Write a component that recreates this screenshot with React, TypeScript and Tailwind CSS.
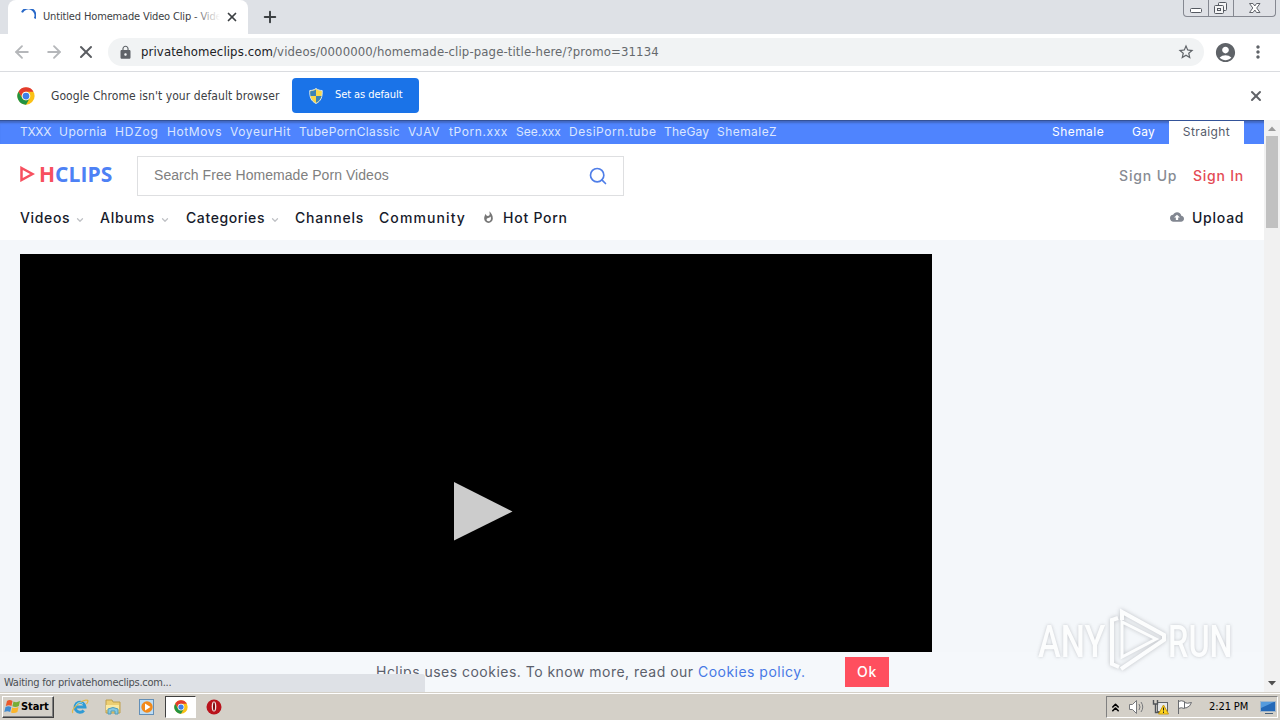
import React from "react";
import {
  ArrowLeft,
  ArrowRight,
  ChevronDown,
  ChevronsUp,
  Plus,
  Search,
  X,
} from "lucide-react";
import {
  MdAccountCircle,
  MdCloudUpload,
  MdLock,
  MdMoreVert,
  MdStarBorder,
  MdWhatshot,
} from "react-icons/md";

const networkLinks = [
  { label: "TXXX", className: "w-[39px] tracking-[-0.3px]" },
  { label: "Upornia", className: "w-[56px] tracking-[0.45px]" },
  { label: "HDZog", className: "w-[52px] tracking-[0.8px]" },
  { label: "HotMovs", className: "w-[63px] tracking-[0.6px]" },
  { label: "VoyeurHit", className: "w-[69px] tracking-[0.6px]" },
  { label: "TubePornClassic", className: "w-[109px] tracking-[0.35px]" },
  { label: "VJAV", className: "w-[41px] tracking-[0.7px]" },
  { label: "tPorn.xxx", className: "w-[67px] tracking-[0.6px]" },
  { label: "See.xxx", className: "w-[53px] tracking-[0px]" },
  { label: "DesiPorn.tube", className: "w-[95px] tracking-[0.55px]" },
  { label: "TheGay", className: "w-[53px] tracking-[0.2px]" },
  { label: "ShemaleZ", className: "w-[64px] tracking-[0.45px]" },
];

const navLinks = [
  { label: "Videos", className: "w-[80px] tracking-[0.65px]", menu: true },
  { label: "Albums", className: "w-[86px] tracking-[0.75px]", menu: true },
  { label: "Categories", className: "w-[109px] tracking-[0.6px]", menu: true },
  { label: "Channels", className: "w-[84px] tracking-[0.8px]", menu: false },
  { label: "Community", className: "w-[103px] tracking-[1.1px]", menu: false },
];

const ChromeLogo = ({ size }: { size: number }) => (
  <svg width={size} height={size} viewBox="0 0 48 48">
    <circle cx="24" cy="24" r="23" fill="#fbc116" />
    <path d="M4 12.5A23 23 0 0 1 44 12.5H24A11.5 11.5 0 0 0 14 30Z" fill="#e33b2e" />
    <path d="M4 12.5A23 23 0 0 0 24 47L34 29.8A11.5 11.5 0 0 1 14 29.8Z" fill="#229342" />
    <circle cx="24" cy="24" r="11.5" fill="#fff" />
    <circle cx="24" cy="24" r="9" fill="#3f7fe8" />
  </svg>
);

const Shield = () => (
  <svg width="14" height="16" viewBox="0 0 14 16">
    <path d="M7 0.5C5 2 3 2.5 0.8 2.5C0.5 9 2 13 7 15.5C12 13 13.5 9 13.2 2.5C11 2.5 9 2 7 0.5Z" fill="#f8d849" stroke="#d5e5ee" />
    <path d="M7 1.5V8H1.5C1.1 6.3 1.2 4.8 1.3 3.2C3.5 3.2 5.3 2.6 7 1.5ZM7 8H12.5C11.8 11 10 13.3 7 14.8Z" fill="#3b83b5" />
  </svg>
);

const WindowButtons = () => (
  <div className="flex h-[17px] w-[93px] rounded-b-[4px] border border-t-0 border-[#858891] bg-[#dfe1e6]">
    <div className="w-[25px] border-r border-[#858891]">
      <svg width="24" height="16" viewBox="0 0 24 16" fill="#fff" stroke="#555961">
        <rect x="6.5" y="8.5" width="11" height="4" rx="1" />
      </svg>
    </div>
    <div className="w-[25px] border-r border-[#858891]">
      <svg width="24" height="16" viewBox="0 0 24 16" fill="#f5f5f6" stroke="#555961">
        <rect x="9.5" y="2.5" width="8" height="8" rx="1" />
        <rect x="5.5" y="5.5" width="9" height="8" rx="1" />
        <rect x="8.5" y="8.5" width="3" height="2" />
      </svg>
    </div>
    <svg width="41" height="16" viewBox="0 0 41 16">
      <path d="M15.5 3.5H19L20.8 6L22.5 3.5H26L22.7 8L26 12.5H22.5L20.8 10L19 12.5H15.5L18.8 8Z" fill="#fff" stroke="#62656c" />
    </svg>
  </div>
);

const TabStrip = () => (
  <div className="flex h-[34px] justify-between bg-[#dee1e6]">
    <div className="flex pl-2">
      <div className="flex h-[34px] w-[240px] items-center rounded-t-lg bg-white pl-[12px]">
        <svg width="16" height="16" viewBox="0 0 16 16" fill="none" stroke="#2868c8" strokeWidth="2">
          <path d="M2 3.4A6.8 6.8 0 0 1 14.8 9.5" />
        </svg>
        <div className="relative ml-[7px] w-[177px] overflow-hidden whitespace-nowrap font-['DejaVu_Sans_Condensed','DejaVu_Sans',sans-serif] text-[11px] [font-stretch:condensed] leading-[16px] tracking-[-0.15px] text-[#3c4043]">
          Untitled Homemade Video Clip - Videos
          <div className="absolute inset-y-0 right-0 w-[28px] bg-linear-to-r from-white/0 to-white" />
        </div>
        <X size={14} strokeWidth={3} className="ml-[5px] text-[#3c4043]" />
      </div>
      <Plus size={18} strokeWidth={2.6} className="ml-[13px] mt-[8px] text-[#3c4043]" />
    </div>
    <div className="pr-1">
      <WindowButtons />
    </div>
  </div>
);

const Toolbar = () => (
  <div className="flex h-[38px] items-center border-b border-[#dadce0] bg-white pb-px">
    <ArrowLeft size={20} strokeWidth={2.2} className="ml-3 text-[#b5b7ba]" />
    <ArrowRight size={20} strokeWidth={2.2} className="ml-3 text-[#b5b7ba]" />
    <X size={20} strokeWidth={2.4} className="ml-[12px] text-[#5a5d61]" />
    <div className="ml-[12px] flex h-7 w-[1096px] items-center rounded-full bg-[#f1f3f4] pl-[10px] pr-[9px]">
      <MdLock size={15} className="text-[#5f6368]" />
      <div className="ml-[8px] flex-1 whitespace-nowrap font-['DejaVu_Sans_Condensed','DejaVu_Sans',sans-serif] text-[13px] [font-stretch:condensed] leading-[18px] tracking-[0.12px] text-[#65696d]">
        <span className="text-[#202124]">privatehomeclips.com</span>
        /videos/0000000/homemade-clip-page-title-here/?promo=31134
      </div>
      <MdStarBorder size={18} className="text-[#5f6368]" />
    </div>
    <MdAccountCircle size={23} className="ml-[10px] text-[#5f6368]" />
    <MdMoreVert size={20} className="ml-[11px] text-[#5f6368]" />
  </div>
);

const DefaultBrowserBar = () => (
  <div className="flex h-[48px] items-center bg-white pb-px pl-[17px] pr-[16px] font-['DejaVu_Sans_Condensed','DejaVu_Sans',sans-serif] [font-stretch:condensed]">
    <ChromeLogo size={18} />
    <span className="ml-4 w-[241px] whitespace-nowrap text-[12px] tracking-[0.07px] text-[#3c4043]">
      Google Chrome isn't your default browser
    </span>
    <button className="flex h-[35px] w-[127px] items-center rounded-[4px] bg-[#1a73e8] pl-[17px] text-[11px] text-white">
      <Shield />
      <span className="ml-[12px] whitespace-nowrap tracking-[-0.08px]">Set as default</span>
    </button>
    <X size={16} strokeWidth={3} className="ml-auto text-[#606368]" />
  </div>
);

const NetworkBar = () => (
  <div className="flex h-6 border-t border-[#345399] bg-[#4f84fe] text-[12px] leading-[22px] shadow-[inset_0_3px_2px_-1px_#4268c2]">
    <div className="flex flex-1 pl-5 text-[#dbe6ff]">
      {networkLinks.map((link) => (
        <a key={link.label} className={`${link.className} whitespace-nowrap`}>
          {link.label}
        </a>
      ))}
    </div>
    <a className="w-[80px] tracking-[0.45px] text-white">Shemale</a>
    <a className="w-[37px] tracking-[0.3px] text-white">Gay</a>
    <a className="mr-5 w-[75px] bg-white text-center tracking-[0.4px] text-[#555b6b]">Straight</a>
  </div>
);

const Logo = () => (
  <div className="flex w-[117px] items-center pb-1 font-['Open_Sans',sans-serif] text-[21px] font-bold leading-6">
    <svg width="15" height="16" viewBox="0 0 15 16" className="mr-[4px]">
      <path d="M1.5 2L12.5 8L1.5 14Z" fill="none" stroke="#f7505f" strokeWidth="2.5" />
    </svg>
    <span className="text-[#f7505f]">H</span>
    <span className="tracking-[0.1px] text-[#4d81f5]">CLIPS</span>
  </div>
);

const SiteHeader = () => (
  <header className="h-24 bg-white px-5 pt-3">
    <div className="flex h-[40px] items-center">
      <Logo />
      <div className="flex h-[40px] w-[487px] items-center justify-between border border-[#dedfe1] pb-px pl-4 pr-[15px]">
        <span className="font-['Liberation_Sans',sans-serif] text-[14px] tracking-[0.05px] text-[#808080]">
          Search Free Homemade Porn Videos
        </span>
        <Search size={20} strokeWidth={2} className="text-[#4f7ee8]" />
      </div>
      <div className="ml-auto flex pb-[2px] text-[14px] font-medium">
        <a className="w-[74px] tracking-[0.85px] text-[#878b93]">Sign Up</a>
        <a className="w-[51px] whitespace-nowrap tracking-[0.75px] text-[#e44b55]">Sign In</a>
      </div>
    </div>
    <nav className="mt-[11px] flex h-5 items-center text-[14px] font-medium tracking-[0.75px] text-[#171b2b]">
      {navLinks.map((link) => (
        <a key={link.label} className={`${link.className} flex items-center whitespace-nowrap`}>
          {link.label}
          {link.menu && <ChevronDown size={10} strokeWidth={3} className="ml-[5px] mt-[5px] text-[#bfc1c5]" />}
        </a>
      ))}
      <MdWhatshot size={13} className="text-[#777]" />
      <a className="ml-[8px]">Hot Porn</a>
      <MdCloudUpload size={14} className="ml-auto text-[#828791]" />
      <a className="ml-2 w-[52px]">Upload</a>
    </nav>
  </header>
);

const AnyRunMark = () => (
  <div className="absolute left-[1038px] top-[487px] flex h-[68px] items-center font-['Roboto',sans-serif] text-[45px] font-medium leading-none text-white opacity-75 [text-shadow:0_0_4px_#b0b3b8]">
    <span className="w-[71px] origin-left scale-x-[0.76]">ANY</span>
    <svg width="58" height="66" viewBox="0 0 58 66" fill="none" stroke="#fff" strokeWidth="4" className="drop-shadow-[0_0_2px_#a8abb0]">
      <path d="M13 14V49L47 31Z" strokeWidth="3" />
      <path d="M9 10L3 12V56L10 59M13 12V4L55 27V32L12 61" />
    </svg>
    <span className="ml-[1px] origin-left scale-x-[0.72]">RUN</span>
  </div>
);

const ScrollBar = () => (
  <div className="flex w-4 flex-col items-center bg-[#f1f1f1]">
    <svg width="16" height="16" viewBox="0 0 16 16">
      <path d="M4 11L8 6.5L12 11Z" fill="#9b9b9b" />
    </svg>
    <div className="h-[92px] w-[12px] bg-[#c1c1c1]" />
    <svg width="16" height="16" viewBox="0 0 16 16" className="mt-auto">
      <path d="M4 5L8 9.5L12 5Z" fill="#505050" />
    </svg>
  </div>
);

const StartFlag = () => (
  <svg width="17" height="16" viewBox="0 0 17 16">
    <path d="M3 2Q5.5 0 8.5 2L7.5 7Q5 5.5 1.8 7Z" fill="#eb582b" />
    <path d="M9.5 2.5Q12.5 4 16 2L14.8 7Q11.5 9 8.4 7.3Z" fill="#76ad36" />
    <path d="M1.5 8Q4.5 6.5 7.3 8L6.2 13Q3.5 11.5 0.3 13Z" fill="#408bd1" />
    <path d="M8.2 8.4Q11.2 10 14.5 8L13.4 13Q10.2 15 7 13.4Z" fill="#fbb52a" />
  </svg>
);

const Taskbar = () => (
  <div className="flex h-7 items-center border-t border-[#d4d0c8] bg-[#d4d0c8] pl-[2px] pr-[2px] shadow-[inset_0_1px_0_#fff]">
    <div className="mt-[1px] flex h-[22px] w-[52px] items-center border border-b-[#404040] border-l-white border-r-[#404040] border-t-white pl-[1px] shadow-[inset_-1px_-1px_0_#808080]">
      <StartFlag />
      <span className="font-['DejaVu_Sans_Condensed','DejaVu_Sans',sans-serif] text-[11px] font-bold [font-stretch:condensed] leading-4 tracking-[-0.1px] text-black">
        Start
      </span>
    </div>
    {/* Internet Explorer */}
    <svg width="18" height="18" viewBox="0 0 18 18" fill="none" className="ml-[17px]">
      <path d="M4 9H14A5 5 0 1 0 12.8 12.5" stroke="#319bd4" strokeWidth="3" />
      <path d="M2 15C-1 13 8 3 15 2C18 2 17 4 15.5 6" stroke="#e5b843" strokeWidth="1.2" />
      <path d="M5 7.5A4 4 0 0 1 12 6" stroke="#83d5f4" />
    </svg>
    {/* Explorer */}
    <svg width="18" height="18" viewBox="0 0 18 18" className="ml-[15px]">
      <path d="M2 2H8L9 4H16V15H2Z" fill="#edcf73" stroke="#bfa04c" />
      <path d="M2 7H15V12H2Z" fill="#fae9a3" />
      <path d="M4 16V11Q9 8 14 11V16H11V13H7V16Z" fill="#86c9e2" stroke="#519dbc" />
    </svg>
    {/* Media player */}
    <svg width="18" height="18" viewBox="0 0 18 18" className="ml-[16px]">
      <rect x="1.5" y="1.5" width="14" height="15" fill="#bdddf5" stroke="#638fb7" />
      <circle cx="9" cy="9" r="5.7" fill="#f28a1b" />
      <path d="M7 5.5L12.5 9L7 12.5Z" fill="#fff" />
    </svg>
    <div className="ml-[9px] mt-[1px] flex h-[22px] w-[31px] items-center justify-center border border-b-white border-l-[#404040] border-r-white border-t-[#404040] bg-white">
      <ChromeLogo size={14} />
    </div>
    <svg width="16" height="16" viewBox="0 0 16 16" className="ml-[10px]">
      <circle cx="8" cy="8" r="7.5" fill="#b9131c" />
      <ellipse cx="8" cy="7.5" rx="2.3" ry="5" fill="#f4e9e9" />
      <ellipse cx="8" cy="7.5" rx="1" ry="4.3" fill="#7c0a10" />
    </svg>
    <div className="ml-auto mt-[1px] flex h-[22px] w-[172px] items-center border border-b-white border-l-[#808080] border-r-white border-t-[#808080]">
      <ChevronsUp size={13} strokeWidth={3} className="ml-[2px] text-black" />
      <svg width="18" height="18" viewBox="0 0 18 18" className="ml-[6px]" fill="#fff" stroke="#77797c">
        <path d="M1.5 6.5H4.5L8.5 2.5V15.5L4.5 11.5H1.5Z" />
        <path d="M11 6Q13 9 11 12M13 4Q16.5 9 13 14" fill="none" />
      </svg>
      <svg width="18" height="18" viewBox="0 0 18 18" className="ml-[6px]">
        <rect x="5.5" y="4.5" width="10" height="9" fill="#e7e9ea" stroke="#606468" />
        <path d="M1.5 2V6H5.5V2M3.5 6V14.5H9" fill="none" stroke="#505458" strokeWidth="1.4" />
        <path d="M11.5 7L16.5 16H6.5Z" fill="#ffd51e" stroke="#c89a11" />
        <path d="M11.5 9.5V12.5M11.5 13.5V15" stroke="#222" />
      </svg>
      <svg width="18" height="18" viewBox="0 0 18 18" className="ml-[6px]" fill="#fff" stroke="#6a6c70">
        <path d="M2.5 2V16M2.5 3.5Q5 2 8.5 3.5V10.5Q5 9 2.5 10.5M8.5 4.5Q11 6 15.5 4.5L13.5 8L10 10L8.5 9.5" />
      </svg>
      <span className="ml-[15px] w-[48px] whitespace-nowrap font-['DejaVu_Sans_Condensed','DejaVu_Sans',sans-serif] text-[11px] [font-stretch:condensed] tracking-[-0.1px] text-black">
        2:21 PM
      </span>
      <svg width="16" height="16" viewBox="0 0 16 16" className="ml-[3px]">
        <rect x="0.5" y="2.5" width="15" height="10" fill="#2469b8" stroke="#a3b7ca" />
        <path d="M1 3H14L1 9Z" fill="#559bdd" />
        <path d="M5 14.5H13" stroke="#455f7a" />
      </svg>
    </div>
  </div>
);

const App = () => {
  return (
    <div className="flex h-[720px] w-[1280px] flex-col overflow-hidden bg-white">
      <TabStrip />
      <Toolbar />
      <DefaultBrowserBar />
      <main className="relative flex h-[572px] font-['Inter',sans-serif]">
        <div className="flex w-[1264px] flex-col bg-[#f4f7fa]">
          <NetworkBar />
          <SiteHeader />
          <div className="ml-5 mt-[14px] flex h-[398px] w-[912px] bg-black pl-[434px] pt-[228px]">
            <svg width="59" height="59" viewBox="0 0 59 59">
              <path d="M0 0L58.5 29.5L0 58.5Z" fill="#ccc" />
            </svg>
          </div>
          <div className="flex h-10 items-center bg-[#f5f8fb] pl-[376px] text-[14px] text-[#5b606c]">
            <p className="w-[469px] whitespace-nowrap pb-px tracking-[0.48px]">
              Hclips uses cookies. To know more, read our <a className="text-[#4778e5]">Cookies policy.</a>
            </p>
            <button className="h-[30px] w-[44px] bg-[#ff4f5e] pb-px text-[14px] font-medium tracking-[0.7px] text-white">Ok</button>
          </div>
        </div>
        <ScrollBar />
        <AnyRunMark />
        <div className="absolute bottom-0 left-0 h-[18px] w-[425px] rounded-tr-[3px] bg-[#dee1e6] pl-[4px] font-['DejaVu_Sans_Condensed','DejaVu_Sans',sans-serif] text-[11px] [font-stretch:condensed] leading-[18px] tracking-[-0.25px] text-[#4b4f53]">
          Waiting for privatehomeclips.com...
        </div>
      </main>
      <Taskbar />
    </div>
  );
};

export default App;
